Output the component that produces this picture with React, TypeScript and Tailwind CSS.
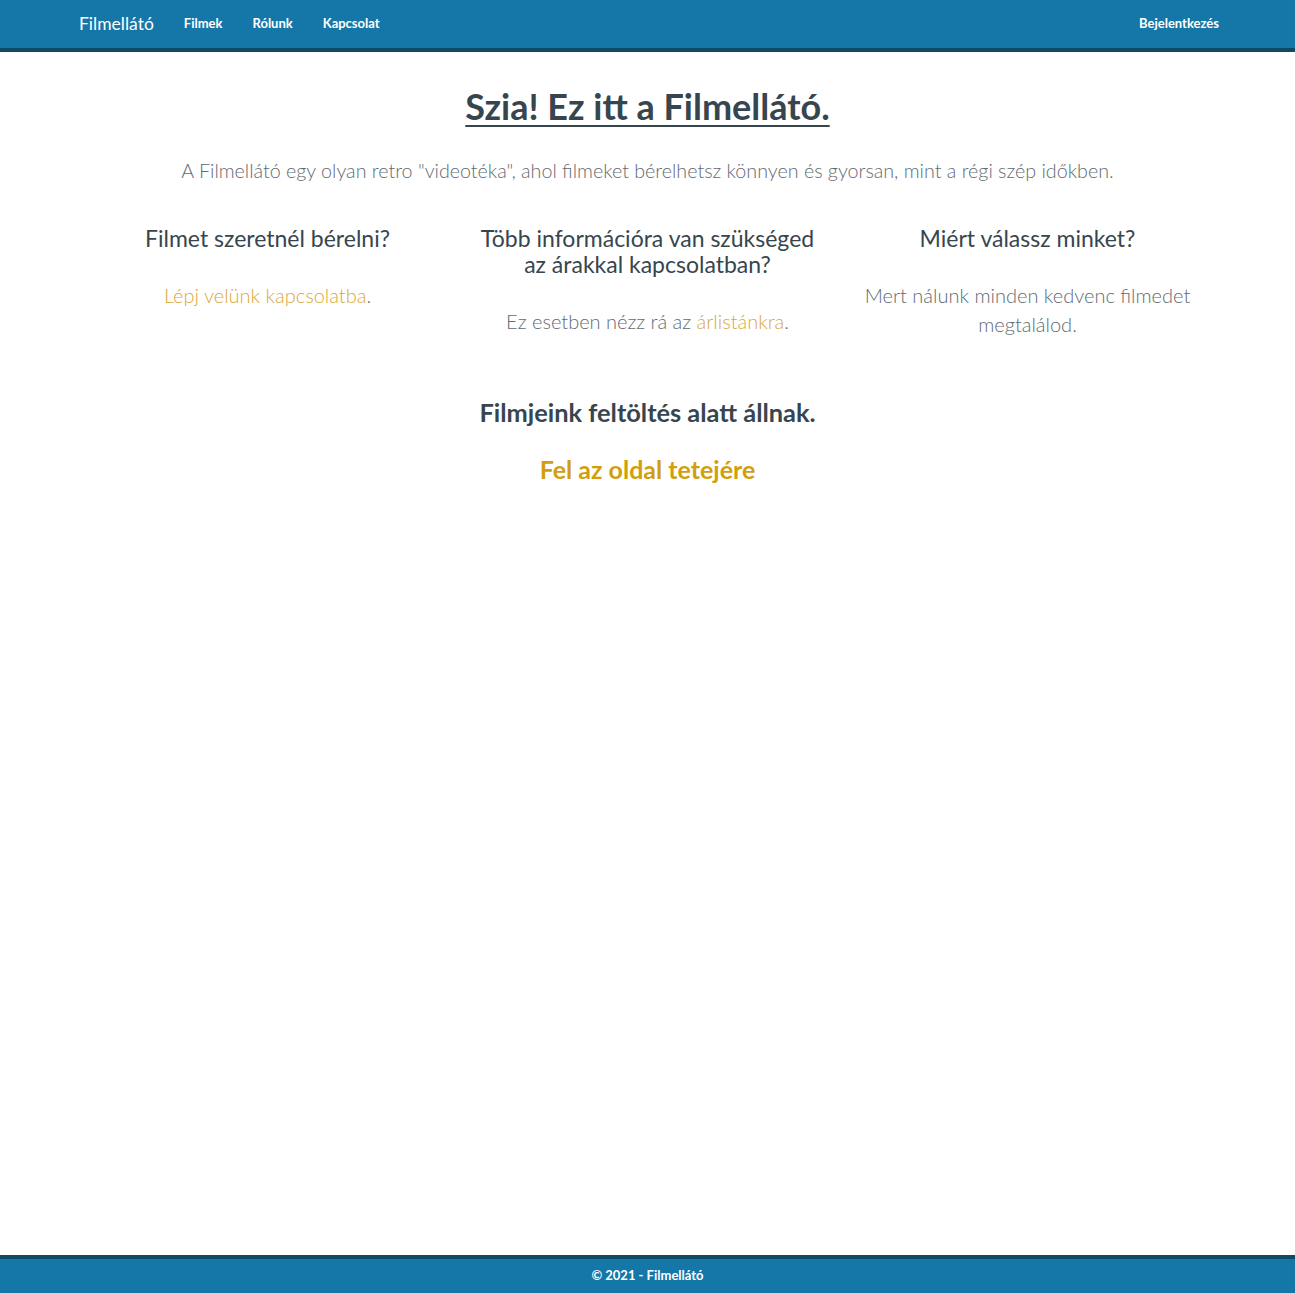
export default function App() {
    return (
        <div className="min-h-screen flex flex-col bg-white font-['Lato','Liberation_Sans',sans-serif] text-[#37464e]">
            <header className="bg-[#1477a8] border-b-4 border-[#0e4a66]">
                <nav className="h-12 flex items-center pl-[79px] pr-[76px] text-white">
                    <a href="#" className="text-[17.5px] mr-[30px]">Filmellátó</a>
                    <a href="#" className="text-[13px] font-bold mr-[30px]">Filmek</a>
                    <a href="#" className="text-[13px] font-bold mr-[30px]">Rólunk</a>
                    <a href="#" className="text-[13px] font-bold">Kapcsolat</a>
                    <a href="#" className="text-[13px] font-bold ml-auto">Bejelentkezés</a>
                </nav>
            </header>

            <main className="flex-1 w-[1140px] mx-auto text-center">
                <h1 className="mt-[32px] text-[36px] leading-[44px] font-bold underline underline-offset-[5px] decoration-2">
                    Szia! Ez itt a Filmellátó.
                </h1>

                <p className="mt-[29px] text-[19.7px] leading-[28px] font-light text-[#5f6b72]">
                    A Filmellátó egy olyan retro "videotéka", ahol filmeket bérelhetsz könnyen és gyorsan, mint a régi szép időkben.
                </p>

                <div className="mt-[40px] grid grid-cols-3">
                    <div className="px-[15px]">
                        <h3 className="text-[23px] leading-[26px]">Filmet szeretnél bérelni?</h3>
                        <p className="mt-[30px] text-[20px] leading-[29px] font-light text-[#5f6b72]">
                            <a href="#" className="text-[#d9a73a]">Lépj velünk kapcsolatba</a>.
                        </p>
                    </div>
                    <div className="px-[12px]">
                        <h3 className="text-[23px] leading-[26px]">Több információra van szükséged az árakkal kapcsolatban?</h3>
                        <p className="mt-[30px] text-[20px] leading-[29px] font-light text-[#5f6b72]">
                            Ez esetben nézz rá az <a href="#" className="text-[#d9a73a]">árlistánkra</a>.
                        </p>
                    </div>
                    <div className="px-[15px]">
                        <h3 className="text-[23px] leading-[26px]">Miért válassz minket?</h3>
                        <p className="mt-[30px] text-[20px] leading-[29px] font-light text-[#5f6b72] px-[10px]">
                            Mert nálunk minden kedvenc filmedet megtalálod.
                        </p>
                    </div>
                </div>

                <h4 className="mt-[58px] text-[25.4px] leading-[30px] font-bold">Filmjeink feltöltés alatt állnak.</h4>

                <a href="#" className="inline-block mt-[27px] text-[25px] leading-[30px] font-bold text-[#d39e0c]">
                    Fel az oldal tetejére
                </a>
            </main>

            <footer className="bg-[#1477a8] border-t-4 border-[#0e4a66] h-[38px] flex items-center justify-center text-white text-[13px] font-bold">
                © 2021 - Filmellátó
            </footer>
        </div>
    );
}
